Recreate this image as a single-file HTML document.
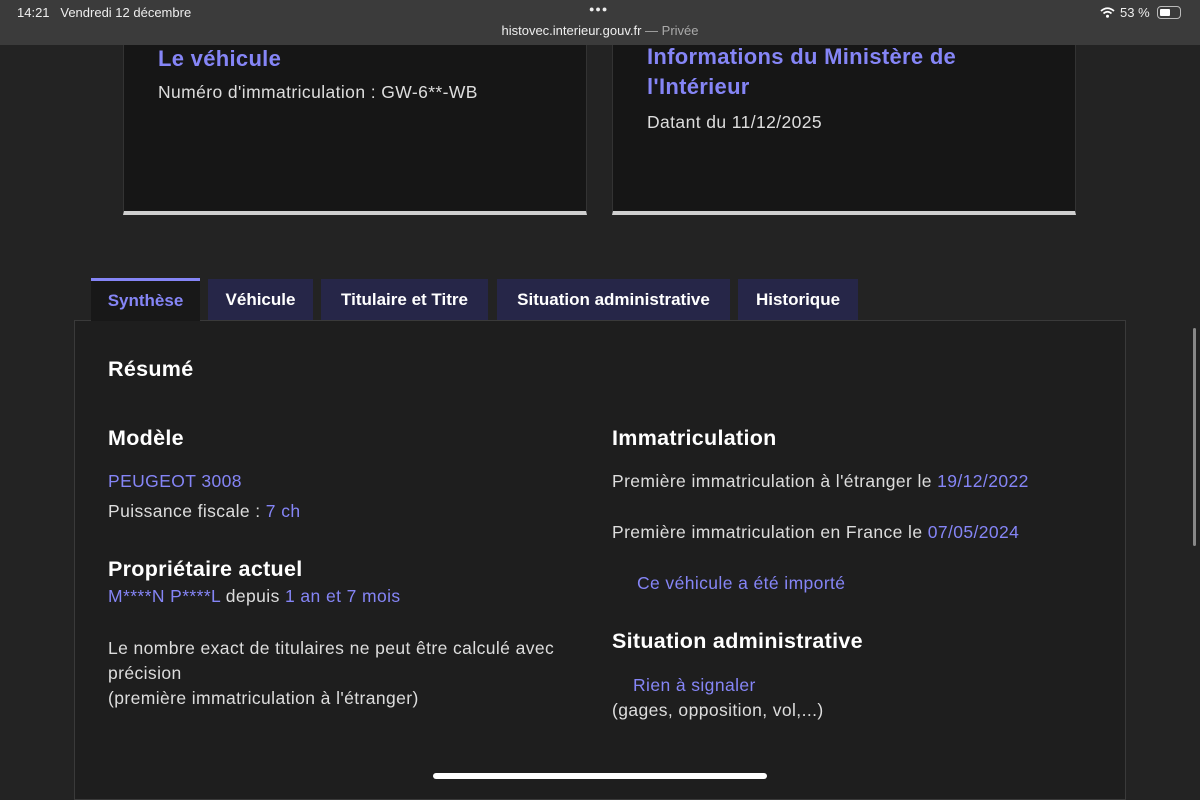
<!DOCTYPE html>
<html><head><meta charset="utf-8"><style>
*{margin:0;padding:0;box-sizing:border-box}
body{width:1200px;height:788px;overflow:hidden;background:#232323;font-family:"Liberation Sans",sans-serif;color:#e6e6e6;position:relative}
.bar{position:absolute;left:0;top:0;width:1200px;height:45px;background:#3b3b3b;color:#eee;font-size:13px}
.card{position:absolute;top:45px;height:170px;background:#161616;border:1px solid #333;border-top:none;border-bottom:4px solid #cfcfcf}
h2{font-size:22px;font-weight:bold;color:#8585f6;letter-spacing:0.3px}
.tab{position:absolute;top:279px;height:41px;background:#262648;color:#fff;font-weight:bold;font-size:17px;display:flex;align-items:center;justify-content:center}
.panel{position:absolute;left:74px;top:320px;width:1052px;height:480px;background:#1e1e1e;border:1px solid #3a3a3a}
.t{position:absolute;font-size:17.5px;color:#ddd;white-space:nowrap;letter-spacing:0.4px}
.t .acc,.t.acc,.acc{color:#8585f6}
.h{position:absolute;font-size:21.5px;font-weight:bold;color:#fff;white-space:nowrap;letter-spacing:0.3px}
</style></head><body>
<div class="bar">
<div style="position:absolute;left:17px;top:5px">14:21&nbsp;&nbsp;&nbsp;Vendredi 12 décembre</div>
<div style="position:absolute;left:589px;top:4px;font-size:9px;letter-spacing:1px">●●●</div>
<div style="position:absolute;left:0;width:1200px;top:23px;text-align:center">histovec.interieur.gouv.fr <span style="color:#aaa">— Privée</span></div>
<svg style="position:absolute;left:1100px;top:7px" width="15" height="11" viewBox="0 0 15 11"><path d="M1 4 Q7.5 -1.5 14 4" stroke="#fff" stroke-width="1.8" fill="none"/><path d="M3.5 6.5 Q7.5 3 11.5 6.5" stroke="#fff" stroke-width="1.8" fill="none"/><circle cx="7.5" cy="9.3" r="1.5" fill="#fff"/></svg>
<div style="position:absolute;left:1120px;top:5px">53 %</div>
<div style="position:absolute;left:1157px;top:6px;width:24px;height:13px;border:1.5px solid #bbb;border-radius:4px"><div style="margin:1.5px;width:10px;height:7px;background:#fff;border-radius:1px"></div></div>
</div>
<div class="card" style="left:123px;width:464px">
<h2 style="position:absolute;left:34px;top:1px">Le véhicule</h2>
<div class="t" style="left:34px;top:37px">Numéro d'immatriculation : GW-6**-WB</div>
</div>
<div class="card" style="left:612px;width:464px">
<h2 style="position:absolute;left:34px;top:-3px;line-height:30px">Informations du Ministère de<br>l'Intérieur</h2>
<div class="t" style="left:34px;top:67px">Datant du 11/12/2025</div>
</div>
<div class="panel"></div>
<div class="tab" style="left:91px;width:109px;background:#181818;color:#8585f6;border-top:3px solid #8585f6;height:43px;top:278px">Synthèse</div>
<div class="tab" style="left:208px;width:105px">Véhicule</div>
<div class="tab" style="left:321px;width:167px">Titulaire et Titre</div>
<div class="tab" style="left:497px;width:233px">Situation administrative</div>
<div class="tab" style="left:738px;width:120px">Historique</div>
<div class="h" style="left:108px;top:357px">Résumé</div>
<div class="h" style="left:108px;top:426px">Modèle</div>
<div class="t acc" style="left:108px;top:471px">PEUGEOT 3008</div>
<div class="t" style="left:108px;top:501px">Puissance fiscale : <span class="acc">7 ch</span></div>
<div class="h" style="left:108px;top:557px">Propriétaire actuel</div>
<div class="t" style="left:108px;top:586px"><span class="acc">M****N P****L</span> depuis <span class="acc">1 an et 7 mois</span></div>
<div class="t" style="left:108px;top:636px;line-height:25px">Le nombre exact de titulaires ne peut être calculé avec<br>précision<br>(première immatriculation à l'étranger)</div>
<div class="h" style="left:612px;top:426px">Immatriculation</div>
<div class="t" style="left:612px;top:471px">Première immatriculation à l'étranger le <span class="acc">19/12/2022</span></div>
<div class="t" style="left:612px;top:522px">Première immatriculation en France le <span class="acc">07/05/2024</span></div>
<div class="t acc" style="left:637px;top:573px">Ce véhicule a été importé</div>
<div class="h" style="left:612px;top:629px">Situation administrative</div>
<div class="t acc" style="left:633px;top:675px">Rien à signaler</div>
<div class="t" style="left:612px;top:700px">(gages, opposition, vol,...)</div>
<div style="position:absolute;left:1193px;top:328px;width:3px;height:218px;background:#888;border-radius:2px"></div>
<div style="position:absolute;left:433px;top:773px;width:334px;height:6px;background:#fff;border-radius:3px"></div>
</body></html>
